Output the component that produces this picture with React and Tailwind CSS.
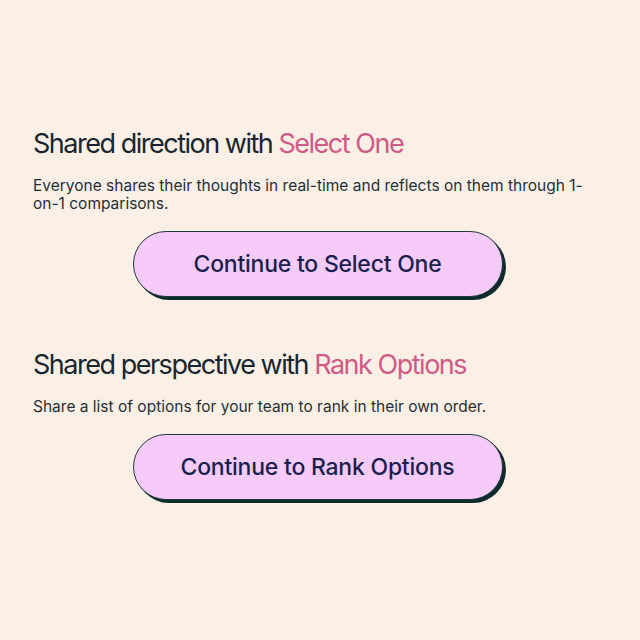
import React from "react";

const Section = ({ lead, accent, text, cta }) => {
  return (
    <section className="flex flex-col">
      <h2 className="text-[27px] leading-[32px] tracking-[-0.055em] text-[#17262e] font-normal">
        {lead} <span className="text-[#d05a86]">{accent}</span>
      </h2>
      <p className="mt-[17px] text-[15.5px] leading-[18px] text-[#1f2f38]">{text}</p>
      <button className="mt-[18px] self-center w-[370px] h-[66px] rounded-full bg-[#f6cbfa] border border-[#1d3a3c] shadow-[3px_3px_0_#0d2b2c] text-[23px] font-medium text-[#1b1f4e] tracking-[-0.01em]">
        {cta}
      </button>
    </section>
  );
};

export default function App() {
  return (
    <div
      className="min-h-screen w-full bg-[#fcefe6] pl-[33px] pr-[38px] pt-[128px] flex flex-col gap-[52px]"
      style={{ fontFamily: "Inter, 'Liberation Sans', sans-serif" }}
    >
      <Section
        lead="Shared direction with"
        accent="Select One"
        text="Everyone shares their thoughts in real-time and reflects on them through 1-on-1 comparisons."
        cta="Continue to Select One"
      />
      <Section
        lead="Shared perspective with"
        accent="Rank Options"
        text="Share a list of options for your team to rank in their own order."
        cta="Continue to Rank Options"
      />
    </div>
  );
}
